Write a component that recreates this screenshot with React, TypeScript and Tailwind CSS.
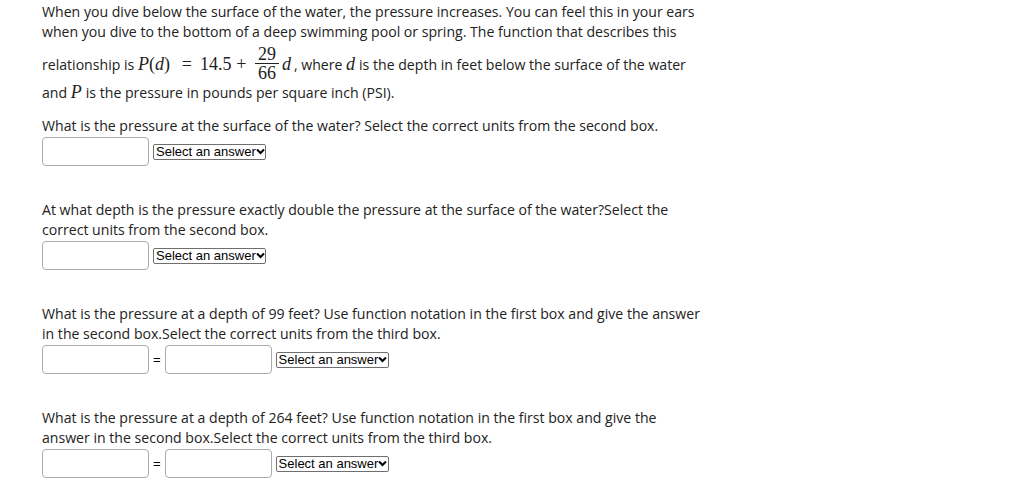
import React from "react";

const Inp = () => (
  <div className="w-[107px] h-[29px] shrink-0 border border-[#ababab] rounded-[4px] bg-white" />
);

const Sel = () => (
  <div className="inline-flex items-center h-[16px] w-[113px] shrink-0 border border-[#6f6f6f] rounded-[2px] pl-[2px] pr-[2px] bg-white text-[13px] leading-none text-black font-['Liberation_Sans',Arial,sans-serif]">
    <span className="flex-1 whitespace-nowrap">Select an answer</span>
    <svg width="9" height="7" viewBox="0 0 9 7" className="shrink-0">
      <path d="M1 1.5 L4.5 5 L8 1.5" fill="none" stroke="#000" strokeWidth="2" />
    </svg>
  </div>
);

const MI = ({ children }: { children: React.ReactNode }) => (
  <span className="font-['Liberation_Serif',serif] italic text-[18px] leading-[20px]">{children}</span>
);

const Eq = () => (
  <div className="flex items-center gap-[4px] h-[29px]">
    <Inp />
    <span className="text-[13px] font-['Liberation_Sans',Arial,sans-serif] text-black">=</span>
    <Inp />
    <Sel />
  </div>
);

export default function App() {
  return (
    <div className="bg-white min-h-[504px] pl-[42px] pt-[2px] text-[14.1px] leading-[20px] text-[#222] font-['Open_Sans',sans-serif]">
      <p className="w-[663px]">
        When you dive below the surface of the water, the pressure increases. You can feel this in your ears
        when you dive to the bottom of a deep swimming pool or spring. The function that describes this
        relationship is{" "}
        <span className="whitespace-nowrap font-['Liberation_Serif',serif] text-[18px] leading-[20px]">
          <span className="inline-block w-[36px]">
            <i>P</i>(<i>d</i>)
          </span>
          <span className="inline-block w-[26px] text-center">=</span>
          <span className="inline-block w-[33px]">14.5</span>
          <span className="inline-block w-[17px] text-center">+</span>
          <span className="inline-flex flex-col items-center align-[10px] leading-[18px] ml-[5px] w-[24px] pt-[3px]">
            <span>29</span>
            <span className="h-px w-full bg-[#222]" />
            <span>66</span>
          </span>
          <i className="ml-[3px]">d</i>
        </span>
        <span className="ml-[3px]">, where</span> <MI>d</MI>
        <span className="ml-[4px]">is the depth in feet below the surface of the water and</span> <MI>P</MI>
        <span className="ml-[4px]">is the pressure in pounds per square inch (PSI).</span>
      </p>

      <div className="mt-[13px]">
        <p className="w-[663px]">
          What is the pressure at the surface of the water? Select the correct units from the second box.
        </p>
        <div className="mt-[1px] flex items-center gap-[4px] h-[29px]">
          <Inp />
          <Sel />
        </div>
      </div>

      <div className="mt-[34px]">
        <p className="w-[663px]">
          At what depth is the pressure exactly double the pressure at the surface of the water?Select the
          correct units from the second box.
        </p>
        <div className="mt-[1px] flex items-center gap-[4px] h-[29px]">
          <Inp />
          <Sel />
        </div>
      </div>

      <div className="mt-[34px]">
        <p className="w-[663px]">
          What is the pressure at a depth of 99 feet? Use function notation in the first box and give the answer
          in the second box.Select the correct units from the third box.
        </p>
        <div className="mt-[1px]">
          <Eq />
        </div>
      </div>

      <div className="mt-[34px]">
        <p className="w-[663px]">
          What is the pressure at a depth of 264 feet? Use function notation in the first box and give the
          answer in the second box.Select the correct units from the third box.
        </p>
        <div className="mt-[1px]">
          <Eq />
        </div>
      </div>
    </div>
  );
}
